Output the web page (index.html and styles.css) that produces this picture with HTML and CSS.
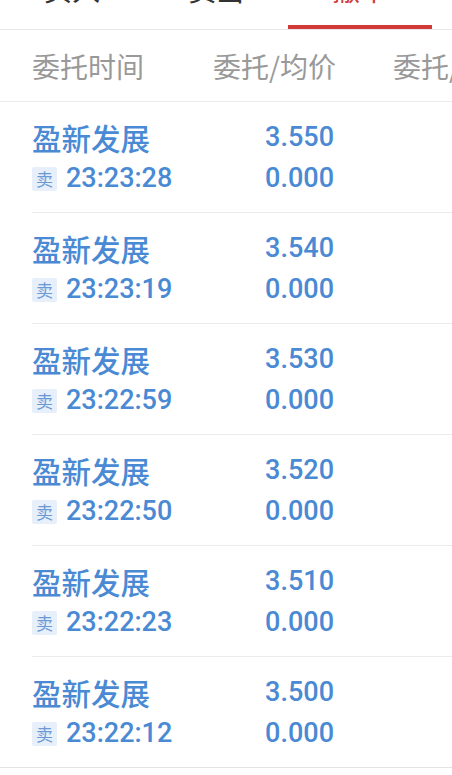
FILE: index.html
```html
<!DOCTYPE html>
<html lang="zh-CN">
<head>
    <meta charset="UTF-8">
    <title>撤单</title>
    <link rel="stylesheet" href="styles.css">
</head>
<body>
    <div class="tabs">
        <div class="tab">买入</div>
        <div class="tab">卖出</div>
        <div class="tab active">撤单</div>
    </div>

    <div class="head">
        <div class="col-time">委托时间</div>
        <div class="col-price">委托/均价</div>
        <div class="col-qty">委托/成交</div>
    </div>

    <div class="list">
        <div class="row">
            <div class="col-time">
                <div class="name">盈新发展</div>
                <div class="time"><span class="tag">卖</span>23:23:28</div>
            </div>
            <div class="col-price">
                <div class="num">3.550</div>
                <div class="num">0.000</div>
            </div>
        </div>
        <div class="row">
            <div class="col-time">
                <div class="name">盈新发展</div>
                <div class="time"><span class="tag">卖</span>23:23:19</div>
            </div>
            <div class="col-price">
                <div class="num">3.540</div>
                <div class="num">0.000</div>
            </div>
        </div>
        <div class="row">
            <div class="col-time">
                <div class="name">盈新发展</div>
                <div class="time"><span class="tag">卖</span>23:22:59</div>
            </div>
            <div class="col-price">
                <div class="num">3.530</div>
                <div class="num">0.000</div>
            </div>
        </div>
        <div class="row">
            <div class="col-time">
                <div class="name">盈新发展</div>
                <div class="time"><span class="tag">卖</span>23:22:50</div>
            </div>
            <div class="col-price">
                <div class="num">3.520</div>
                <div class="num">0.000</div>
            </div>
        </div>
        <div class="row">
            <div class="col-time">
                <div class="name">盈新发展</div>
                <div class="time"><span class="tag">卖</span>23:22:23</div>
            </div>
            <div class="col-price">
                <div class="num">3.510</div>
                <div class="num">0.000</div>
            </div>
        </div>
        <div class="row">
            <div class="col-time">
                <div class="name">盈新发展</div>
                <div class="time"><span class="tag">卖</span>23:22:12</div>
            </div>
            <div class="col-price">
                <div class="num">3.500</div>
                <div class="num">0.000</div>
            </div>
        </div>
    </div>
</body>
</html>
```

FILE: styles.css
```css
body { margin: 0; background: #fff; font-family: "Noto Sans CJK SC", sans-serif; overflow: hidden; }

.tabs { display: flex; margin-top: -37px; border-bottom: 1px solid #e8e8e8; }
.tab { width: 144px; text-align: center; font-size: 28px; line-height: 53px; padding-bottom: 9px; border-bottom: 4px solid transparent; color: #333; }
.tab.active { color: #d23a3a; border-bottom-color: #d23a3a; }

.head { display: flex; height: 71px; align-items: center; padding-left: 32px; border-bottom: 1px solid #ebebeb; white-space: nowrap; font-size: 28px; line-height: 40px; color: #999; }
.head .col-price { text-align: left; }
.col-time { width: 181px; flex: none; }
.col-price { width: 121px; flex: none; text-align: right; }
.col-qty { margin-left: 59px; flex: none; }

.list { border-bottom: 1px solid #e3e3e3; }
.row { display: flex; margin-left: 32px; padding: 15px 0 13px; border-bottom: 1px solid #ebebeb; color: #4a89d3; }
.row:last-child { border-bottom: none; }
.name { font-size: 29.5px; line-height: 41px; font-weight: 500; }
.time, .num { font-family: Roboto, "Noto Sans CJK SC", sans-serif; font-size: 27px; line-height: 41px; font-weight: 500; }
.time { display: flex; align-items: center; }
.tag { width: 25px; height: 24px; margin-right: 9px; border-radius: 2px; background: #e6effa; color: #6a9ad6; font-family: "Noto Sans CJK SC", sans-serif; font-size: 17px; font-weight: 400; line-height: 24px; text-align: center; }
```
